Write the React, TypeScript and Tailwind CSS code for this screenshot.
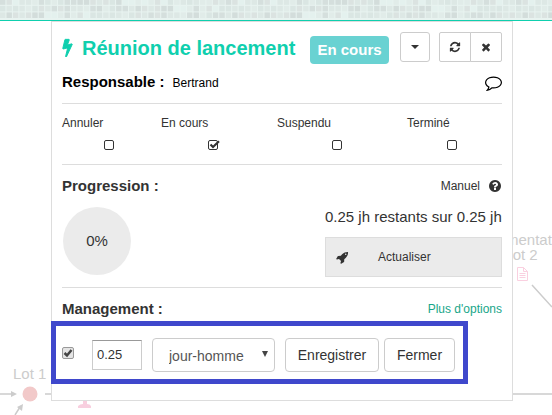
import type { ReactNode } from "react";

const ICONS = {
  bolt: "M1333 566q18 20 7 44l-540 1157q-13 25-42 25-4 0-14-2-17-5-25.5-19t-4.5-30l197-808-406 101q-4 1-12 1-18 0-31-11-18-15-13-39l201-825q4-14 16-23t28-9h328q19 0 32 12.5t13 29.5q0 8-5 18l-171 463 396-98q8-2 12-2 19 0 34 15z",
  refresh:
    "M1639 1056q0 5-1 7-64 268-268 434.5t-478 166.5q-146 0-282.5-55t-243.5-157l-129 129q-19 19-45 19t-45-19-19-45v-448q0-26 19-45t45-19h448q26 0 45 19t19 45-19 45l-137 137q71 66 161 102t187 36q134 0 250-65t186-179q11-17 53-117 8-23 30-23h192q13 0 22.5 9.5t9.5 22.5zm25-800v448q0 26-19 45t-45 19h-448q-26 0-45-19t-19-45 19-45l138-138q-148-137-349-137-134 0-250 65t-186 179q-11 17-53 117-8 23-30 23h-199q-13 0-22.5-9.5t-9.5-22.5v-7q65-268 270-434.5t480-166.5q146 0 284 55.5t245 156.5l130-129q19-19 45-19t45 19 19 45z",
  close:
    "M1490 1322q0 40-28 68l-136 136q-28 28-68 28t-68-28l-294-294-294 294q-28 28-68 28t-68-28l-136-136q-28-28-28-68t28-68l294-294-294-294q-28-28-28-68t28-68l136-136q28-28 68-28t68 28l294 294 294-294q28-28 68-28t68 28l136 136q28 28 28 68t-28 68l-294 294 294 294q28 28 28 68z",
  comment:
    "M896 384q-204 0-381.5 69.5t-282 187.5-104.5 255q0 112 71.5 213.5t201.5 175.5l87 50-27 96q-24 91-70 172 152-63 275-171l43-38 57 6q69 8 130 8 204 0 381.5-69.5t282-187.5 104.5-255-104.5-255-282-187.5-381.5-69.5zm896 512q0 174-120 321.5t-326 233-450 85.5q-70 0-145-8-198 175-460 242-49 14-114 22h-5q-15 0-27-10.5t-16-27.5v-1q-3-4-.5-12t2-10 4.5-9.5l6-9 7-8.5 8-9q7-8 31-34.5t34.5-38 31-39.5 32.5-51 27-59 26-76q-157-89-247.5-220t-90.5-281q0-174 120-321.5t326-233 450-85.5 450 85.5 326 233 120 321.5z",
  help: "M1024 1376v-192q0-14-9-23t-23-9h-192q-14 0-23 9t-9 23v192q0 14 9 23t23 9h192q14 0 23-9t9-23zm256-672q0-88-55.5-163t-138.5-116-170-41q-243 0-371 213-15 24 8 42l132 100q7 6 19 6 16 0 25-12 53-68 86-92 34-24 86-24 48 0 85.5 26t37.5 59q0 38-20 61t-68 45q-63 28-115.5 86.5t-52.5 125.5v36q0 14 9 23t23 9h192q14 0 23-9t9-23q0-19 21.5-49.5t54.5-49.5q32-18 49-28.5t46-35 44.5-48 28-60.5 12.5-81zm384 192q0 209-103 385.5t-279.5 279.5-385.5 103-385.5-103-279.5-279.5-103-385.5 103-385.5 279.5-279.5 385.5-103 385.5 103 279.5 279.5 103 385.5z",
  rocket:
    "M1440 448q0-40-28-68t-68-28-68 28-28 68 28 68 68 28 68-28 28-68zm224-288q0 249-75.5 430.5t-253.5 360.5q-81 80-195 176l-20 379q-2 16-16 26l-384 224q-7 4-16 4-12 0-23-9l-64-64q-13-14-8-32l85-276-281-281-276 85q-3 1-9 1-14 0-23-9l-64-64q-17-19-5-39l224-384q10-14 26-16l379-20q96-114 176-195 188-187 358-258t431-71q14 0 24 9.5t10 22.5z",
};

function Icon({ name, className }: { name: keyof typeof ICONS; className: string }) {
  return (
    <svg viewBox="0 0 1792 1792" className={`shrink-0 ${className}`} fill="currentColor" aria-hidden="true">
      <path d={ICONS[name]} />
    </svg>
  );
}

const SHADES = ["#d5dfdd", "#dde8e5", "#e1ece9", "#dbe3e1", "#dae6e3", "#e4f1ee", "#d3dddb"];

/* Mosaic banner: a repeating band of small tiles in pale greens. */
function Banner() {
  const tiles = [];
  for (let row = 0; row < 3; row++) {
    for (let col = 0; col < 40; col++) {
      const shade = SHADES[(col * col * 3 + row * 11 + col * (row + 5) + ((col * 7) % 5)) % SHADES.length];
      tiles.push(
        <rect key={`${row}-${col}`} x={col * 6.45} y={row * 6.6 - 0.8} width="5.45" height="5.6" fill={shade} />,
      );
    }
  }
  return (
    <header className="h-[21px] border-b border-[#0fcfae] bg-[#e8f3f0]">
      <svg className="block h-5 w-full" aria-hidden="true">
        <defs>
          <pattern id="tiles" width="258" height="20" patternUnits="userSpaceOnUse">
            {tiles}
          </pattern>
        </defs>
        <rect width="100%" height="20" fill="url(#tiles)" />
      </svg>
    </header>
  );
}

/* Faded project diagram behind the task panel. */
function Diagram() {
  return (
    <div className="absolute inset-0 overflow-hidden text-[15px] leading-[15px] text-[#cccccc]">
      <svg className="absolute top-0 left-0 h-[415px] w-[552px]" aria-hidden="true">
        <g stroke="#cccccc" strokeWidth="1.5" fill="#cccccc">
          <path d="M0 394H12M45 394H52M15 415L20 407M513 394H552M532 285L552 307" fill="none" />
          <path d="M11 391L17 394L11 397zM17 407L23 404L22 411z" stroke="none" />
        </g>
        <circle cx="30" cy="394" r="7.5" fill="#f2c9c9" />
        <path d="M78 408v-2q2-2 5-2v-4h4v4q3 0 4 2v2z" fill="#f8cfdf" />
        <path d="M517.500 267.500h6l4 4v9h-10zM523.500 267.500v4h4M519.500 273.500h6M519.500 275.500h6M519.500 277.500h6" fill="none" stroke="#fad0e0" />
      </svg>
      <span className="absolute top-[366px] left-[13px]">Lot 1</span>
      <p className="absolute top-[232px] left-[471px] w-[100px] text-center whitespace-nowrap">
        Documentation
        <br />
        Lot 2
      </p>
    </div>
  );
}

function Status({ id, label, checked, className }: { id: string; label: string; checked?: boolean; className: string }) {
  return (
    <div className={className}>
      <label htmlFor={id} className="block text-xs leading-4">
        {label}
      </label>
      <span className="mt-[9px] ml-[42px] grid h-[10px] w-3">
        <input
          id={id}
          type="checkbox"
          defaultChecked={checked}
          className="peer col-start-1 row-start-1 size-[10px] appearance-none rounded-[2px] border border-[#333333]"
        />
        <svg viewBox="0 0 12 10" className="pointer-events-none invisible col-start-1 row-start-1 h-[10px] w-3 peer-checked:visible" aria-hidden="true">
          <path d="M2.500 4.500L5 7L11 1.200" fill="none" stroke="#333333" strokeWidth="2.200" />
        </svg>
      </span>
    </div>
  );
}

function Section({ children, className }: { children: ReactNode; className: string }) {
  return <section className={`border-t border-[#dddddd] ${className}`}>{children}</section>;
}

const BUTTON = "flex items-center justify-center border border-[#cccccc] bg-white";

export default function App() {
  return (
    <div className="relative min-h-screen overflow-hidden bg-white font-['Liberation_Sans',Arial,sans-serif] text-[#333333]">
      <Diagram />
      <div className="relative">
        <Banner />
        <main className="mr-[39px] ml-[51px] border border-[#dddddd] bg-white px-[10px] pb-4">
          <div className="flex pt-[10px]">
            <Icon name="bolt" className="mt-[6px] -ml-1 size-[19px] stroke-current stroke-[90px] text-[#0fcfae]" />
            <h1 className="ml-[5px] text-xl leading-8 font-bold whitespace-nowrap text-[#0fcfae]">Réunion de lancement</h1>
            <span className="mt-1 ml-auto flex h-7 w-[79px] items-center justify-center rounded bg-[#69d2d2] text-[15px] font-bold text-white">
              En cours
            </span>
            <button type="button" aria-label="Plus d'actions" className={`${BUTTON} ml-[11px] h-[30px] w-[30px] rounded-[3px]`}>
              <svg viewBox="0 0 8 4" className="h-1 w-2" aria-hidden="true">
                <path d="M0 0h8L4 4z" fill="#333333" />
              </svg>
            </button>
            <div className="ml-[9px] flex">
              <button type="button" aria-label="Rafraîchir" className={`${BUTTON} h-[30px] w-8 rounded-l-[2px]`}>
                <Icon name="refresh" className="size-3" />
              </button>
              <button type="button" aria-label="Fermer le panneau" className={`${BUTTON} -ml-px h-[30px] w-8 rounded-r-[2px]`}>
                <Icon name="close" className="size-3" />
              </button>
            </div>
          </div>
          <div className="flex h-[39px] items-center pb-[2px] text-black">
            <h2 className="text-[15px] font-bold">Responsable :</h2>
            <span className="ml-2 text-xs">Bertrand</span>
            <button type="button" aria-label="Commentaires" className="ml-auto">
              <Icon name="comment" className="size-[17px]" />
            </button>
          </div>
          <Section className="flex h-[61px] pt-[11px]">
            <Status id="cancel" label="Annuler" className="w-[99px]" />
            <Status id="running" label="En cours" checked className="w-[116px] [&>span]:ml-[47px]" />
            <Status id="paused" label="Suspendu" className="w-[130px] [&>span]:ml-[55px]" />
            <Status id="done" label="Terminé" className="[&>span]:ml-10" />
          </Section>
          <Section className="h-[123px] pt-[11px]">
            <div className="flex h-5 items-center">
              <h2 className="text-[15px] font-bold">Progression :</h2>
              <span className="ml-auto text-xs">Manuel</span>
              <Icon name="help" className="ml-2 size-[14px]" />
            </div>
            <div className="flex justify-between pt-px pl-px">
              <div className="mt-[10px] flex size-[68px] items-center justify-center rounded-full bg-[#ebebeb] text-[15px]">0%</div>
              <div className="w-[177px] pt-[10px]">
                <p className="text-[15px] leading-5 whitespace-nowrap">0.25 jh restants sur 0.25 jh</p>
                <button type="button" className="mt-[10px] flex h-10 w-full items-center border border-[#dddddd] bg-[#ebebeb] text-xs">
                  <Icon name="rocket" className="ml-[10px] size-[13px]" />
                  <span className="ml-[29px]">Actualiser</span>
                </button>
              </div>
            </div>
          </Section>
          <Section className="pt-[11px]">
            <div className="flex h-5 items-center justify-between">
              <h2 className="text-[15px] font-bold">Management :</h2>
              <a href="#options" className="text-xs text-[#18a689]">
                Plus d'options
              </a>
            </div>
            <div className="mt-[2px] -ml-[11px] flex h-[63px] w-fit items-center border-[5px] border-[#3f48cc] pt-1 pr-2 pl-[6px] text-sm">
              <span className="mb-1 grid size-3">
                <input
                  type="checkbox"
                  defaultChecked
                  aria-label="Activer la charge"
                  className="peer col-start-1 row-start-1 size-3 appearance-none rounded-[2px] border border-[#999999] bg-[#e4e4e4]"
                />
                <svg viewBox="0 0 12 12" className="pointer-events-none invisible col-start-1 row-start-1 size-3 peer-checked:visible" aria-hidden="true">
                  <path d="M2.500 6L5 8.500L9.500 3" fill="none" stroke="#444444" strokeWidth="2.500" />
                </svg>
              </span>
              <input
                type="text"
                aria-label="Charge"
                defaultValue="0.25"
                className="ml-[18px] h-[30px] w-[50px] border border-[#cccccc] border-t-[#999999] px-1 text-[13px]"
              />
              <span className="ml-[10px] grid">
                <select
                  aria-label="Unité"
                  className="col-start-1 row-start-1 h-[34px] w-[123px] appearance-none rounded border border-[#cccccc] bg-white pt-[2px] pl-4 text-sm text-[#555555]"
                >
                  <option>jour-homme</option>
                  <option>heure</option>
                </select>
                <svg viewBox="0 0 6 6" className="pointer-events-none col-start-1 row-start-1 mr-[7px] mb-[2px] size-[6px] self-center justify-self-end" aria-hidden="true">
                  <path d="M0 0h6L3 6z" fill="#444444" />
                </svg>
              </span>
              <button type="button" className={`${BUTTON} ml-[10px] h-[34px] w-[94px] rounded`}>
                Enregistrer
              </button>
              <button type="button" className={`${BUTTON} ml-[5px] h-[34px] w-[71px] rounded`}>
                Fermer
              </button>
            </div>
          </Section>
        </main>
      </div>
    </div>
  );
}
